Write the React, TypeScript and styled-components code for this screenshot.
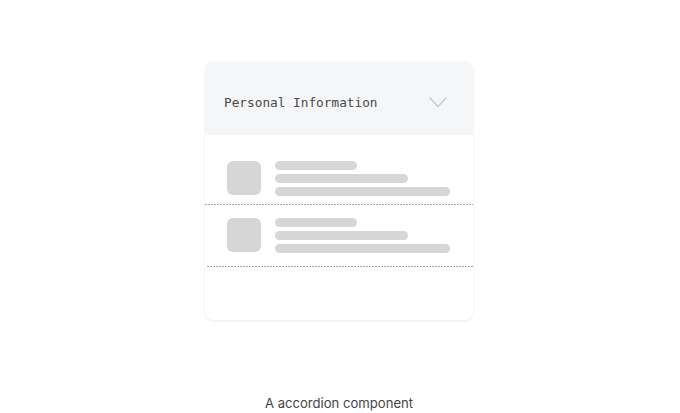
import React from 'react';
import styled, { createGlobalStyle } from 'styled-components';

const GlobalStyle = createGlobalStyle`
  html, body {
    margin: 0;
    padding: 0;
    background: #ffffff;
  }
`;

const Page = styled.div`
  width: 680px;
  height: 413px;
  display: flex;
  flex-direction: column;
  align-items: center;
  padding: 62px 2px 0 0;
  box-sizing: border-box;
`;

const Card = styled.div`
  width: 268px;
  height: 258px;
  border-radius: 8px;
  background: #ffffff;
  box-shadow: 0 1px 3px rgba(0, 0, 0, 0.08), 0 0 1px rgba(0, 0, 0, 0.05);
  overflow: hidden;
  display: flex;
  flex-direction: column;
`;

const Header = styled.div`
  height: 73px;
  flex-shrink: 0;
  box-sizing: border-box;
  padding: 7px 26px 0 19px;
  display: flex;
  align-items: center;
  justify-content: space-between;
  background: #f5f6f7;
`;

const Title = styled.span`
  font-family: 'DejaVu Sans Mono', 'Liberation Mono', monospace;
  font-size: 12.75px;
  color: #4a4a4a;
`;

const Body = styled.div`
  padding-top: 26px;
  display: flex;
  flex-direction: column;
`;

const Row = styled.div<{ $top: number; $bottom: number }>`
  display: flex;
  gap: 14px;
  padding: ${({ $top }) => $top}px 22px ${({ $bottom }) => $bottom}px 22px;
`;

const Divider = styled.div<{ $shift?: number }>`
  height: 1px;
  margin-left: ${({ $shift }) => $shift ?? 0}px;
  background-image: repeating-linear-gradient(
    to right,
    #a6a6a6 0,
    #a6a6a6 2px,
    transparent 2px,
    transparent 3px
  );
`;

const Thumb = styled.div`
  width: 34px;
  height: 34px;
  border-radius: 6px;
  background: #d6d6d6;
  flex-shrink: 0;
`;

const Lines = styled.div`
  display: flex;
  flex-direction: column;
  gap: 4px;
`;

const Bar = styled.div<{ $w: number }>`
  width: ${({ $w }) => $w}px;
  height: 9px;
  border-radius: 5px;
  background: #d6d6d6;
`;

const Caption = styled.div`
  margin-top: 75px;
  font-family: Inter, 'Liberation Sans', sans-serif;
  font-size: 13.1px;
  color: #444444;
`;

function Chevron() {
  return (
    <svg width="18" height="11" viewBox="0 0 18 11" fill="none">
      <polyline
        points="1,1 9,9.5 17,1"
        stroke="#c9c9c9"
        strokeWidth="1.4"
        strokeLinecap="round"
        strokeLinejoin="round"
      />
    </svg>
  );
}

function Item({ top, bottom }: { top: number; bottom: number }) {
  return (
    <Row $top={top} $bottom={bottom}>
      <Thumb />
      <Lines>
        <Bar $w={82} />
        <Bar $w={133} />
        <Bar $w={175} />
      </Lines>
    </Row>
  );
}

export default function App() {
  return (
    <>
      <GlobalStyle />
      <Page>
        <Card>
          <Header>
            <Title>Personal Information</Title>
            <Chevron />
          </Header>
          <Body>
            <Item top={0} bottom={8} />
            <Divider />
            <Item top={13} bottom={13} />
            <Divider $shift={2} />
          </Body>
        </Card>
        <Caption>A accordion component</Caption>
      </Page>
    </>
  );
}
